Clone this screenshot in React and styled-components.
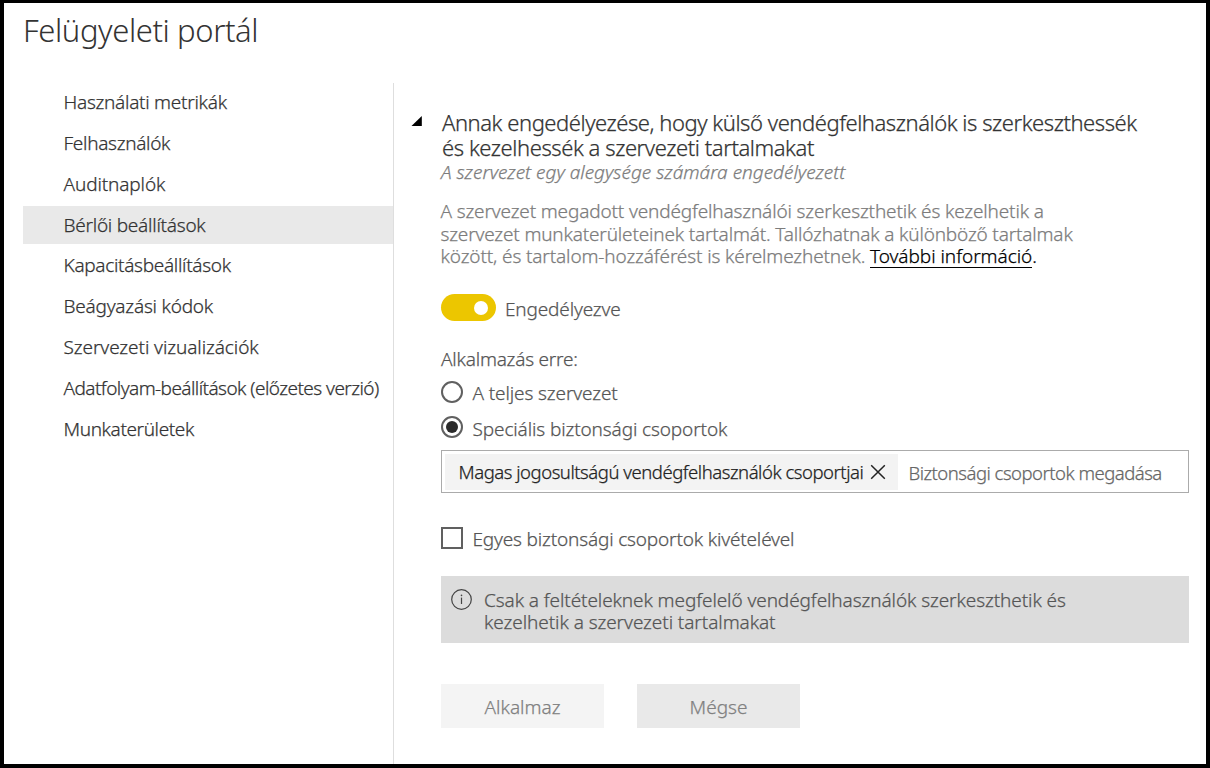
import React from "react";
import styled, { createGlobalStyle } from "styled-components";

const GlobalStyle = createGlobalStyle`
  *, *::before, *::after { box-sizing: border-box; }
  body { margin: 0; background: #000; }
  h1, h2, p { margin: 0; font-weight: inherit; }
  button, input { font: inherit; }
`;

const Window = styled.div`
  width: 1210px;
  height: 768px;
  border: 4px solid #000;
  border-top-width: 3px;
  background: #fff;
  color: #333;
  font-family: "Noto Sans", "Open Sans", sans-serif;
  font-weight: 300;
  font-size: 19px;
  -webkit-text-stroke: 0.25px currentColor;
  display: flex;
  flex-direction: column;
  overflow: hidden;
`;

/* A single line of text whose tracking can be tuned. */
const Line = styled.span`
  display: block;
  white-space: nowrap;
  letter-spacing: ${(p) => p.$track || 0}px;
`;

const Header = styled.header`
  height: 80px;
  padding: 7px 0 0 19px;
`;

const Title = styled.h1`
  font-size: 31px;
  line-height: 40px;
  -webkit-text-stroke-width: 0;
`;

const Body = styled.div`
  flex: 1;
  display: flex;
  min-height: 0;
`;

const Sidebar = styled.nav`
  width: 390px;
  padding-left: 19px;
  border-right: 1px solid #dedede;
  display: flex;
  flex-direction: column;
  gap: 2.85px;
`;

const NavItem = styled.a`
  height: 38px;
  line-height: 39px;
  padding-left: 40.5px;
  color: #333;
  background: ${(p) => (p.$active ? "#e9e9e9" : "transparent")};
`;

const Main = styled.main`
  flex: 1;
  display: flex;
  padding: 27px 17px 0 17px;
`;

const Gutter = styled.div`
  width: 30px;
  padding-top: 6px;
  svg { display: block; }
`;

const Setting = styled.section`
  width: 748px;
  display: flex;
  flex-direction: column;
`;

const Heading = styled.h2`
  font-size: 22px;
  line-height: 25px;
  padding-left: 1px;
`;

const Status = styled.p`
  font-style: italic;
  line-height: 25px;
  color: #7c7c7c;
`;

const Description = styled.p`
  margin-top: 15px;
  margin-left: -0.5px;
  line-height: 22.7px;
  color: #7c7c7c;
`;

const Link = styled.a`
  display: inline-block;
  height: 22.7px;
  color: #000;
  letter-spacing: -0.04px;
  border-bottom: 1px solid #000;
`;

const Stop = styled.span`
  color: #000;
`;

const ToggleRow = styled.div`
  margin-top: 26px;
  height: 27px;
  display: flex;
  align-items: center;
  gap: 9px;
  color: #555;
`;

const Toggle = styled.span`
  width: 55px;
  height: 27px;
  padding-right: 8px;
  border-radius: 14px;
  background: #ecc600;
  display: flex;
  align-items: center;
  justify-content: flex-end;
  &::after {
    content: "";
    width: 14px;
    height: 14px;
    border-radius: 50%;
    background: #fff;
  }
`;

const Label = styled(Line)`
  line-height: 24px;
  padding-top: ${(p) => p.$drop || 0}px;
`;

const GroupLabel = styled.div`
  margin-top: 25px;
  height: 26px;
  line-height: 26px;
  color: #555;
`;

const Option = styled.label`
  margin-top: ${(p) => p.$top}px;
  height: 22px;
  display: flex;
  align-items: center;
  gap: 9.5px;
  color: #555;
`;

const Radio = styled.span`
  width: 22px;
  height: 22px;
  border: 2px solid #606060;
  border-radius: 50%;
  display: grid;
  place-items: center;
  &::after {
    content: "";
    width: 12px;
    height: 12px;
    border-radius: 50%;
    background: ${(p) => (p.$checked ? "#2b2b2b" : "transparent")};
  }
`;

const Checkbox = styled.span`
  width: 22px;
  height: 22px;
  border: 2px solid #606060;
`;

const GroupField = styled.div`
  margin-top: 12px;
  height: 43px;
  padding: 3px 3px 3px 2.5px;
  border: 1px solid #ababab;
  display: flex;
  align-items: center;
  font-size: 18.5px;
`;

const Chip = styled.span`
  width: 453.5px;
  height: 36px;
  padding-left: 14px;
  background: #f3f3f3;
  display: flex;
  align-items: center;
  color: #222;
  svg { margin-left: 6.5px; }
`;

const Placeholder = styled(Line)`
  margin-left: 10.5px;
  padding-top: 2px;
  color: #666;
`;

const Notice = styled.div`
  margin-top: 27px;
  height: 67px;
  padding: 12.5px 10px;
  background: #dcdcdc;
  display: flex;
  gap: 12px;
  line-height: 22.6px;
  color: #555;
`;

const Actions = styled.div`
  margin-top: 41px;
  display: flex;
  gap: 33px;
`;

const Button = styled.button`
  width: 163px;
  height: 44px;
  padding: 2px 0 0;
  border: 0;
  background: ${(p) => (p.$muted ? "#f4f4f4" : "#e9e9e9")};
  color: #808080;
`;

const navItems = [
  { label: "Használati metrikák", track: -0.27 },
  { label: "Felhasználók", track: -0.3 },
  { label: "Auditnaplók", track: -0.12 },
  { label: "Bérlői beállítások", track: -0.25, active: true },
  { label: "Kapacitásbeállítások", track: -0.31 },
  { label: "Beágyazási kódok", track: -0.22 },
  { label: "Szervezeti vizualizációk", track: -0.08 },
  { label: "Adatfolyam-beállítások (előzetes verzió)", track: -0.56 },
  { label: "Munkaterületek", track: -0.38 },
];

const CollapseIcon = () => (
  <svg width="12" height="11" viewBox="0 0 12 11">
    <path d="M10.8 0v10H0.5z" fill="#000" />
  </svg>
);

const CloseIcon = () => (
  <svg width="16" height="16" viewBox="0 0 16 16" fill="none" stroke="#222" strokeWidth="1.5">
    <path d="M1.2 1.2l13.6 13.6M14.8 1.2L1.2 14.8" />
  </svg>
);

const InfoIcon = () => (
  <svg width="21" height="21" viewBox="0 0 21 21" fill="none" stroke="#444" strokeWidth="1.2">
    <circle cx="10.5" cy="10.5" r="9.8" />
    <path d="M10.5 8.6v6.4" />
    <circle cx="10.5" cy="6.4" r="0.8" fill="#444" stroke="none" />
  </svg>
);

export default function App() {
  return (
    <>
      <GlobalStyle />
      <Window>
        <Header>
          <Title><Line $track={-0.4}>Felügyeleti portál</Line></Title>
        </Header>
        <Body>
          <Sidebar>
            {navItems.map((item) => (
              <NavItem key={item.label} $active={item.active}>
                <Line $track={item.track}>{item.label}</Line>
              </NavItem>
            ))}
          </Sidebar>
          <Main>
            <Gutter><CollapseIcon /></Gutter>
            <Setting>
              <Heading>
                <Line $track={-0.45}>Annak engedélyezése, hogy külső vendégfelhasználók is szerkeszthessék</Line>
                <Line $track={-0.43}>és kezelhessék a szervezeti tartalmakat</Line>
              </Heading>
              <Status><Line>A szervezet egy alegysége számára engedélyezett</Line></Status>
              <Description>
                <Line $track={-0.15}>A szervezet megadott vendégfelhasználói szerkeszthetik és kezelhetik a</Line>
                <Line $track={-0.17}>szervezet munkaterületeinek tartalmát. Tallózhatnak a különböző tartalmak</Line>
                <Line $track={-0.13}>
                  között, és tartalom-hozzáférést is kérelmezhetnek. <Link>További információ</Link><Stop>.</Stop>
                </Line>
              </Description>
              <ToggleRow>
                <Toggle />
                <Label $track={-0.15} $drop={3}>Engedélyezve</Label>
              </ToggleRow>
              <GroupLabel><Line $track={-0.22}>Alkalmazás erre:</Line></GroupLabel>
              <Option $top={9}>
                <Radio />
                <Label $track={-0.12} $drop={2}>A teljes szervezet</Label>
              </Option>
              <Option $top={13}>
                <Radio $checked />
                <Label $track={-0.12} $drop={3}>Speciális biztonsági csoportok</Label>
              </Option>
              <GroupField>
                <Chip>
                  <Line $track={-0.46}>Magas jogosultságú vendégfelhasználók csoportjai</Line>
                  <CloseIcon />
                </Chip>
                <Placeholder $track={-0.5}>Biztonsági csoportok megadása</Placeholder>
              </GroupField>
              <Option $top={34}>
                <Checkbox />
                <Label $track={-0.17} $drop={2}>Egyes biztonsági csoportok kivételével</Label>
              </Option>
              <Notice>
                <InfoIcon />
                <div>
                  <Line $track={-0.09}>Csak a feltételeknek megfelelő vendégfelhasználók szerkeszthetik és</Line>
                  <Line $track={-0.07}>kezelhetik a szervezeti tartalmakat</Line>
                </div>
              </Notice>
              <Actions>
                <Button $muted>Alkalmaz</Button>
                <Button>Mégse</Button>
              </Actions>
            </Setting>
          </Main>
        </Body>
      </Window>
    </>
  );
}
